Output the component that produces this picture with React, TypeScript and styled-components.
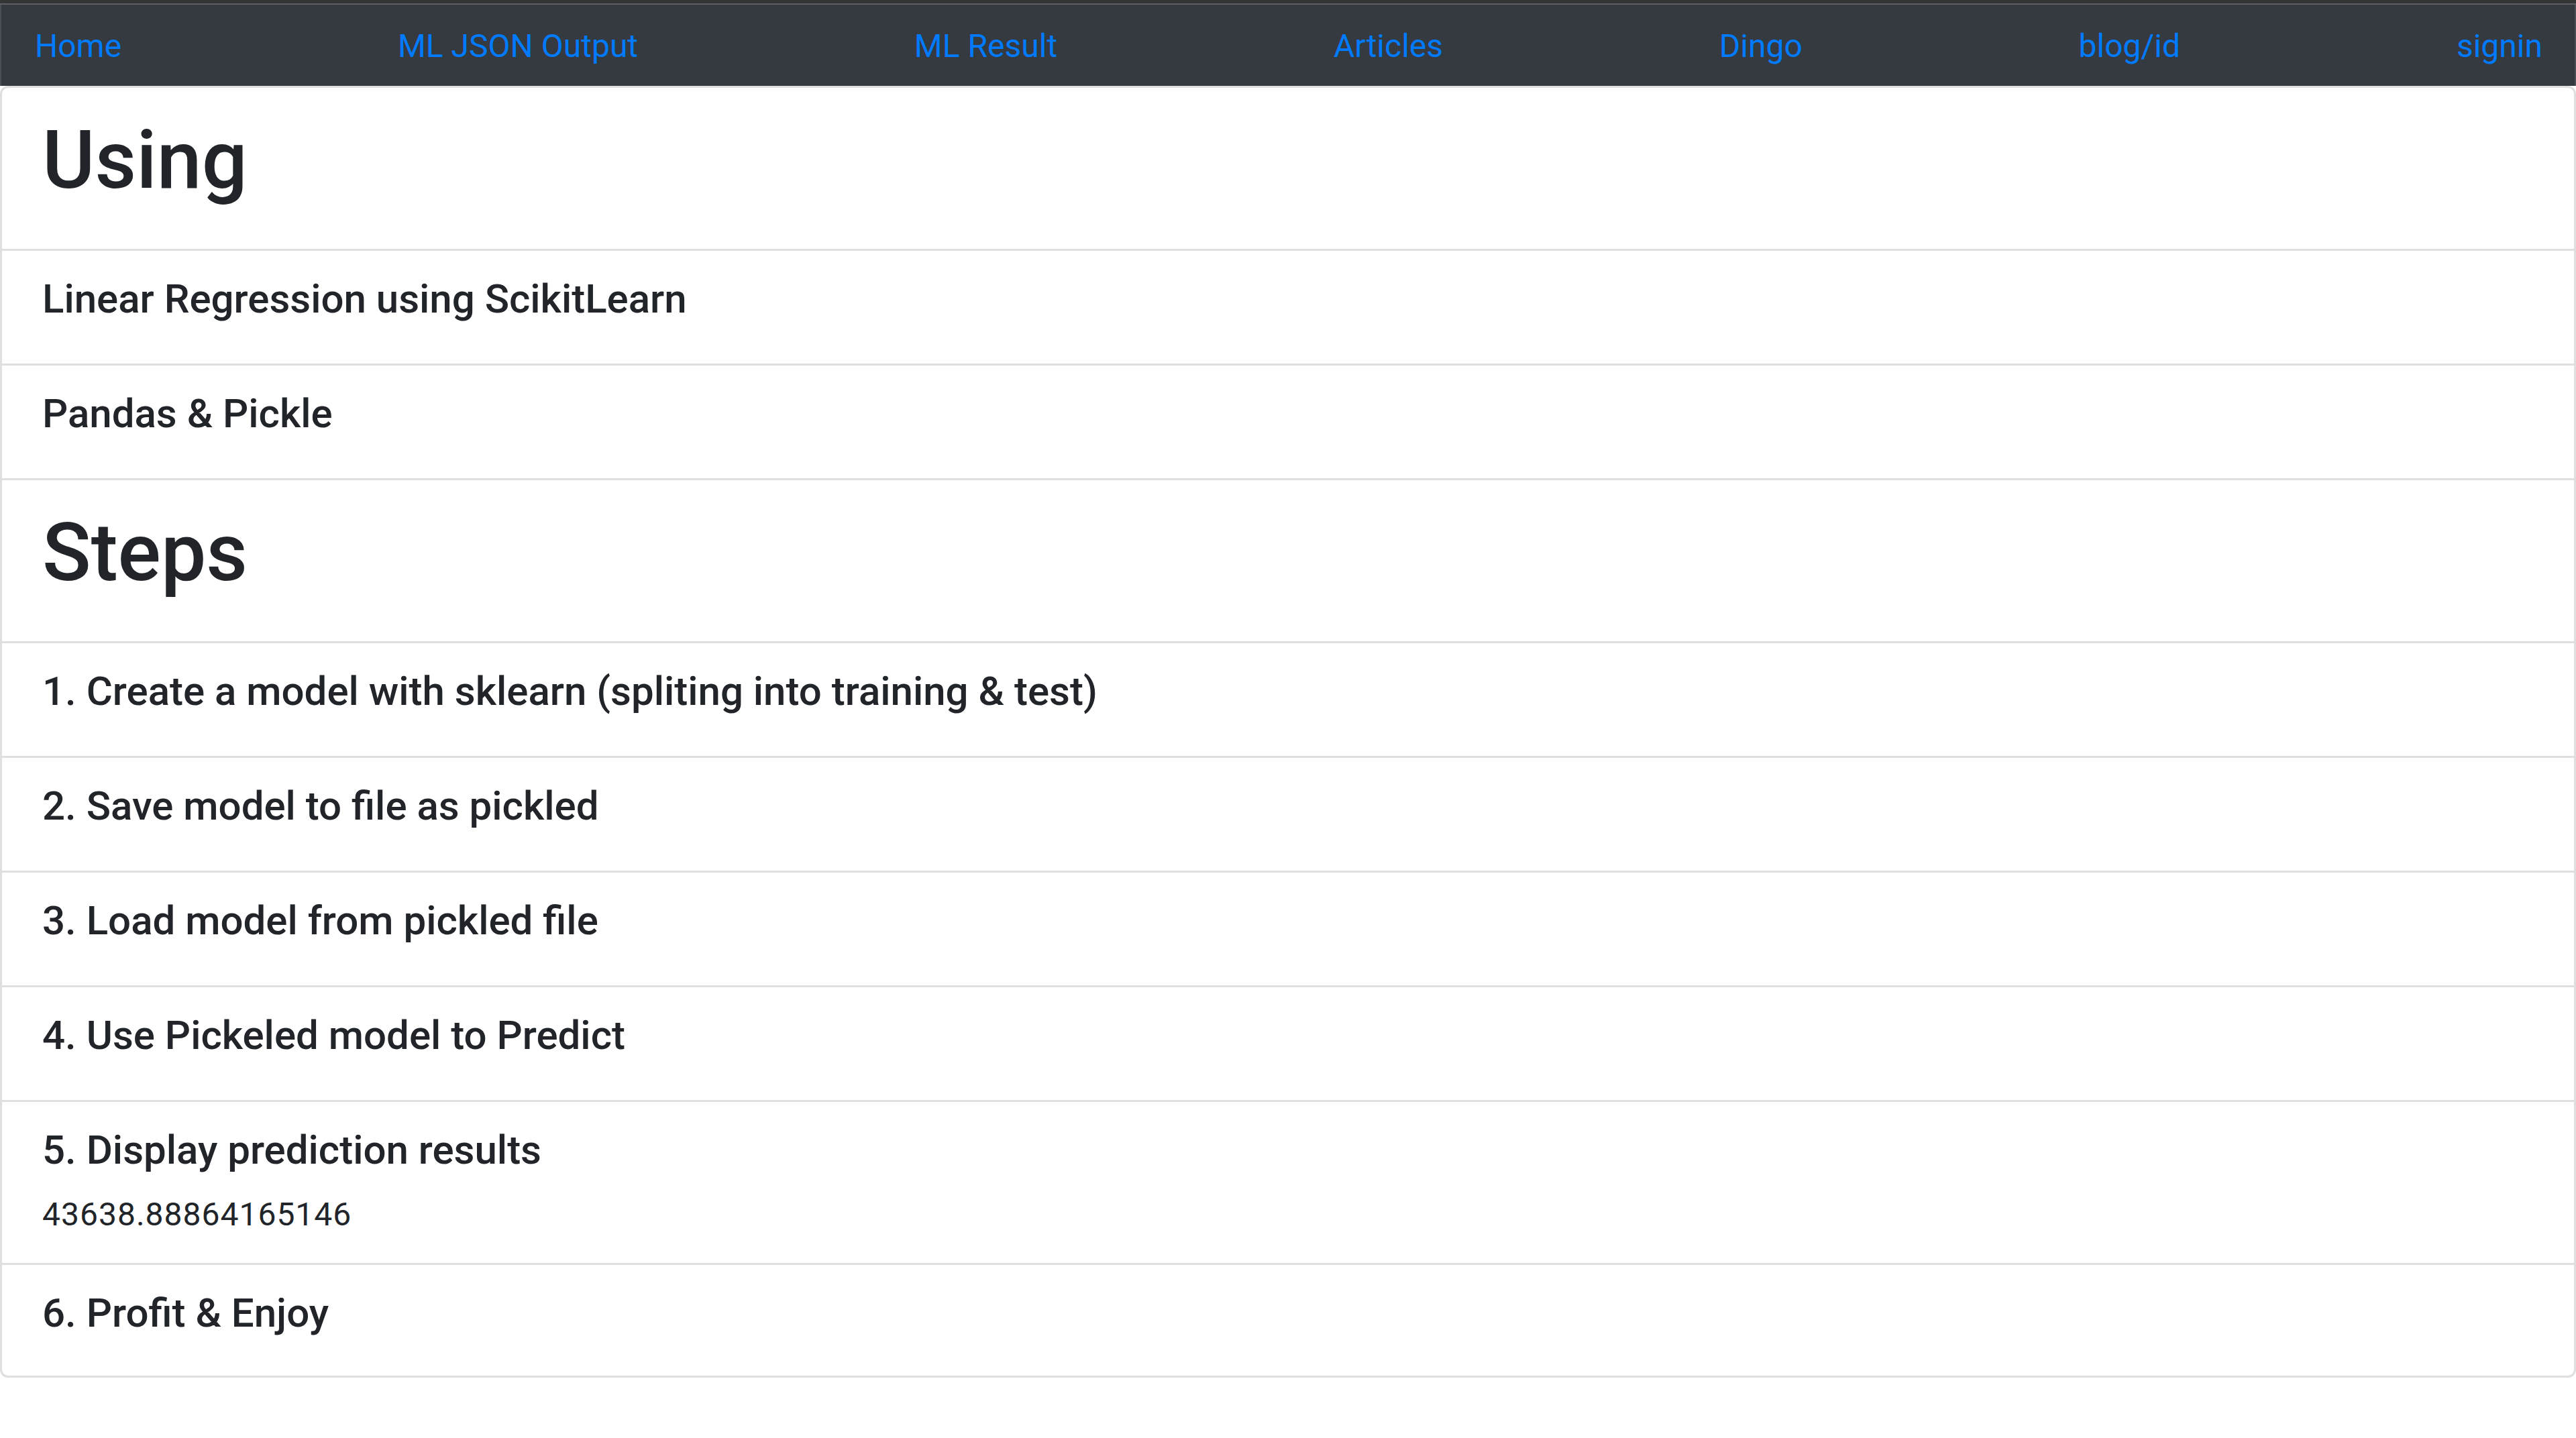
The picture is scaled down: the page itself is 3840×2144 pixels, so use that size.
import React from 'react';
import styled, { createGlobalStyle } from 'styled-components';

const GlobalStyle = createGlobalStyle`
    html, body {
        margin: 0;
        padding: 0;
        background: #ffffff;
    }
    body {
        font-family: 'Liberation Sans', Arial, sans-serif;
        font-size: 48px;
        line-height: 1.5;
        color: #212529;
    }
    * {
        box-sizing: border-box;
    }
`;

const Page = styled.div`
    display: flex;
    flex-direction: column;
    width: 3840px;
`;

const Frame = styled.div`
    height: 7px;
    background: #333436;
    border-bottom: 2px solid #5c5f63;
`;

const NavBar = styled.nav`
    display: flex;
    justify-content: space-between;
    align-items: center;
    height: 121px;
    padding: 3px 48px 0 50px;
    background-color: #343a40;
    border-left: 2px solid #4a4f55;
    border-right: 2px solid #4a4f55;
`;

const NavLink = styled.a`
    color: #007bff;
    text-decoration: none;
    font-family: Roboto, 'Liberation Sans', sans-serif;
    font-size: 48px;
    line-height: 72px;
`;

const Card = styled.ul`
    list-style: none;
    margin: 0;
    padding: 0;
    border: 3px solid #dfdfdf;
    border-radius: 12px;
    background: #ffffff;
    overflow: hidden;
`;

const Item = styled.li`
    padding: 36px 60px;
    border-bottom: 3px solid #dfdfdf;

    &:last-child {
        border-bottom: none;
        padding-bottom: 33px;
    }
`;

const Heading = styled.h1`
    margin: 0 0 24px;
    font-family: Roboto, 'Liberation Sans', sans-serif;
    font-size: 120px;
    font-weight: 500;
    line-height: 144px;
`;

const Title = styled.h5`
    margin: 0 0 24px;
    font-family: Roboto, 'Liberation Sans', sans-serif;
    font-size: 60px;
    font-weight: 500;
    line-height: 72px;
`;

const Result = styled.p`
    margin: 0;
    font-family: Roboto, 'Liberation Sans', sans-serif;
    font-size: 48px;
    line-height: 72px;
    letter-spacing: 1px;
`;

const links = ['Home', 'ML JSON Output', 'ML Result', 'Articles', 'Dingo', 'blog/id', 'signin'];

const steps = [
    '1. Create a model with sklearn (spliting into training & test)',
    '2. Save model to file as pickled',
    '3. Load model from pickled file',
    '4. Use Pickeled model to Predict',
];

export default function App() {
    return (
        <Page>
            <GlobalStyle />
            <Frame />
            <NavBar>
                {links.map((l) => (
                    <NavLink key={l} href="#">{l}</NavLink>
                ))}
            </NavBar>
            <Card>
                <Item><Heading>Using</Heading></Item>
                <Item><Title>Linear Regression using ScikitLearn</Title></Item>
                <Item><Title>Pandas &amp; Pickle</Title></Item>
                <Item><Heading>Steps</Heading></Item>
                {steps.map((s) => (
                    <Item key={s}><Title>{s}</Title></Item>
                ))}
                <Item>
                    <Title>5. Display prediction results</Title>
                    <Result>43638.88864165146</Result>
                </Item>
                <Item><Title>6. Profit &amp; Enjoy</Title></Item>
            </Card>
        </Page>
    );
}
